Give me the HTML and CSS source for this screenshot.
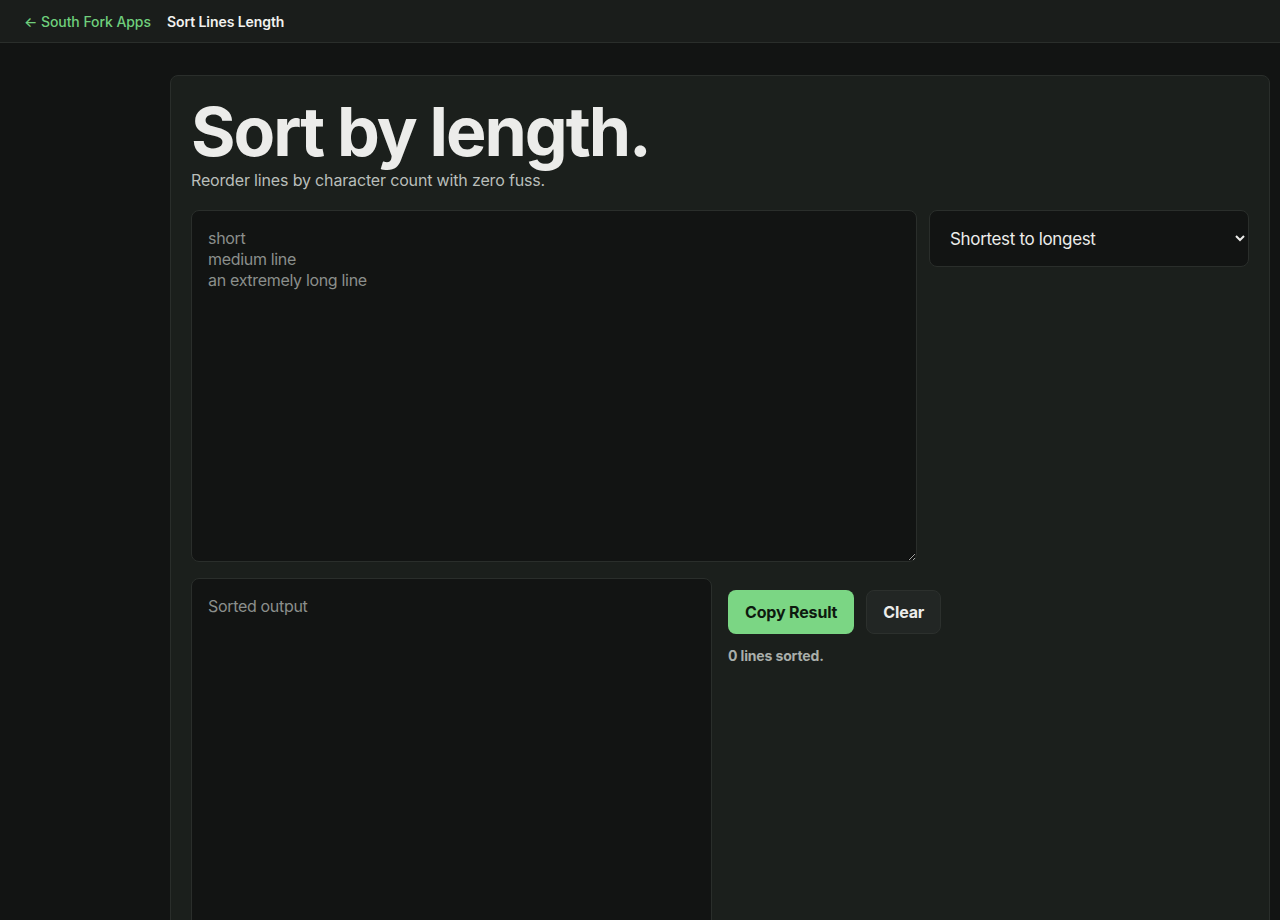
FILE: index.html
```html
<!DOCTYPE html>
<html lang="en">
<head>
  <meta charset="UTF-8">
  <meta name="viewport" content="width=device-width, initial-scale=1.0">
  <title>Sort Lines Length - South Fork Apps</title>
  <link rel="stylesheet" href="styles.css">
</head>
<body>
  <div class="topbar">
    <a class="back-link" href="#">← South Fork Apps</a>
    <span class="app-name">Sort Lines Length</span>
  </div>

  <div class="main">
    <div class="card">
      <h1>Sort by length.</h1>
      <p class="subtitle">Reorder lines by character count with zero fuss.</p>

      <div class="input-row">
        <textarea id="input" class="text-box input-box" placeholder="short&#10;medium line&#10;an extremely long line"></textarea>
        <select id="order" class="order-select">
          <option>Shortest to longest</option>
          <option>Longest to shortest</option>
        </select>
      </div>

      <div class="output-row">
        <textarea id="output" class="text-box output-box" placeholder="Sorted output" readonly></textarea>
        <div class="actions">
          <div class="button-row">
            <button class="btn btn-primary">Copy Result</button>
            <button class="btn btn-secondary">Clear</button>
          </div>
          <p class="status">0 lines sorted.</p>
        </div>
      </div>
    </div>
  </div>
</body>
</html>
```

FILE: styles.css
```css
body {
  margin: 0;
  background-color: #121413;
  color: #ececea;
  font-family: Inter, "Liberation Sans", Arial, sans-serif;
}

.topbar {
  display: flex;
  align-items: center;
  gap: 16px;
  height: 42px;
  padding: 0 24px;
  background-color: #1a1d1b;
  border-bottom: 1px solid #2a2e2b;
  font-size: 14px;
  letter-spacing: -0.005em;
}

.back-link {
  color: #6fcf7c;
  text-decoration: none;
  font-weight: 500;
}

.app-name {
  color: #f2f2ef;
  font-weight: 600;
}

.main {
  padding: 32px 10px 0 170px;
}

.card {
  background-color: #1b1f1c;
  border: 1px solid #2a2e2b;
  border-radius: 8px;
  padding: 15px 20px 40px;
}

.card h1 {
  margin: 0;
  font-size: 68px;
  line-height: 80px;
  font-weight: 700;
  letter-spacing: -0.03em;
  color: #ececea;
}

.subtitle {
  margin: 0 0 20px;
  font-size: 16px;
  line-height: 19px;
  letter-spacing: -0.01em;
  color: #b9beba;
}

.input-row {
  display: grid;
  grid-template-columns: 1fr 320px;
  gap: 12px;
  align-items: start;
}

.output-row {
  display: grid;
  grid-template-columns: 1fr 1fr;
  gap: 16px;
  margin-top: 16px;
  align-items: start;
}

.text-box {
  box-sizing: border-box;
  width: 100%;
  height: 352px;
  padding: 17px 16px 16px;
  background-color: #121413;
  color: #ececea;
  border: 1px solid #2a2e2b;
  border-radius: 8px;
  font-family: Inter, "Liberation Sans", Arial, sans-serif;
  font-size: 16px;
  line-height: 21px;
  letter-spacing: -0.02em;
  resize: vertical;
}

.text-box::placeholder {
  color: #8b8f8c;
}

.text-box:focus {
  outline: none;
  border-color: #6fcf7c;
}

.output-box {
  resize: none;
}

.order-select {
  box-sizing: border-box;
  width: 100%;
  height: 57px;
  padding: 0 6px 0 16px;
  background-color: #121413;
  color: #ececea;
  border: 1px solid #2a2e2b;
  border-radius: 8px;
  font-family: Inter, "Liberation Sans", Arial, sans-serif;
  font-size: 17px;
  letter-spacing: -0.02em;
}

.actions {
  padding-top: 12px;
}

.button-row {
  display: flex;
  gap: 12px;
}

.btn {
  height: 44px;
  padding: 0 17px;
  border-radius: 8px;
  font-family: Inter, "Liberation Sans", Arial, sans-serif;
  font-size: 16px;
  font-weight: 700;
  letter-spacing: -0.01em;
  cursor: pointer;
}

.btn-primary {
  background-color: #7bd684;
  color: #0e1a0f;
  border: none;
}

.btn-secondary {
  background-color: #222624;
  color: #ececea;
  border: 1px solid #2c302d;
  padding: 0 16px;
}

.status {
  margin: 13px 0 0;
  font-size: 14px;
  font-weight: 700;
  letter-spacing: -0.01em;
  color: #a9aeaa;
}
```
